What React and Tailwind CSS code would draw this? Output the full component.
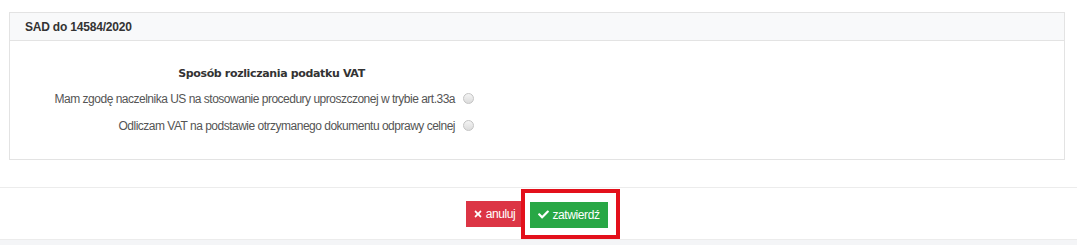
import { FaTimes, FaCheck } from "react-icons/fa";

function Radio() {
  return (
    <span className="inline-block w-[11px] h-[11px] rounded-full border border-[#c4c4c4] bg-gradient-to-b from-[#f4f4f4] to-[#dcdcdc] shrink-0" />
  );
}

function Row({ label }) {
  return (
    <div className="flex items-center h-[27px]">
      <div className="w-[453px] text-right pr-[8px] text-[12px] tracking-[-0.5px] text-[#555] whitespace-nowrap">{label}</div>
      <Radio />
    </div>
  );
}

export default function App() {
  return (
    <div className="w-[1077px] h-[245px] bg-white font-['Liberation_Sans',Arial,sans-serif] flex flex-col overflow-hidden">
      <div className="px-[9px] pt-[12px] pr-[12px]">
        <div className="border border-[#e3e3e3] h-[148px] flex flex-col">
          <div className="h-[28px] bg-[#f8f9fa] border-b border-[#e3e3e3] flex items-center px-[15px]">
            <span className="text-[12px] font-bold text-[#333] tracking-[-0.2px]">SAD do 14584/2020</span>
          </div>
          <div className="pt-[25px]">
            <div className="flex">
              <div className="w-[455px] text-center pl-[68px] text-[11px] font-bold text-[#333] font-['DejaVu_Sans',Verdana,sans-serif] tracking-[-0.35px] leading-[15px]">
                Sposób rozliczania podatku VAT
              </div>
            </div>
            <div className="mt-[4px]">
              <Row label="Mam zgodę naczelnika US na stosowanie procedury uproszczonej w trybie art.33a" />
              <Row label="Odliczam VAT na podstawie otrzymanego dokumentu odprawy celnej" />
            </div>
          </div>
        </div>
      </div>
      <div className="mt-[27px] h-[53px] border-t border-b border-[#ececec] bg-white flex items-center pl-[466px]">
        <div className="flex items-center">
          <button className="h-[26px] w-[56px] bg-[#dc3545] text-white text-[12px] tracking-[-0.4px] flex items-center justify-center gap-[3px]">
            <FaTimes className="w-[10px] h-[10px]" />
            anuluj
          </button>
          <div className="ml-[-1px] border-[4px] border-[#e3101b] pl-[5px] pr-[8px] pt-[9px] pb-[7px]">
            <button className="h-[26px] w-[78px] bg-[#28a745] text-white text-[12px] tracking-[-0.4px] flex items-center justify-center gap-[3px]">
              <FaCheck className="w-[11px] h-[11px]" />
              zatwierdź
            </button>
          </div>
        </div>
      </div>
      <div className="flex-1 bg-[#f4f5f7]" />
    </div>
  );
}
